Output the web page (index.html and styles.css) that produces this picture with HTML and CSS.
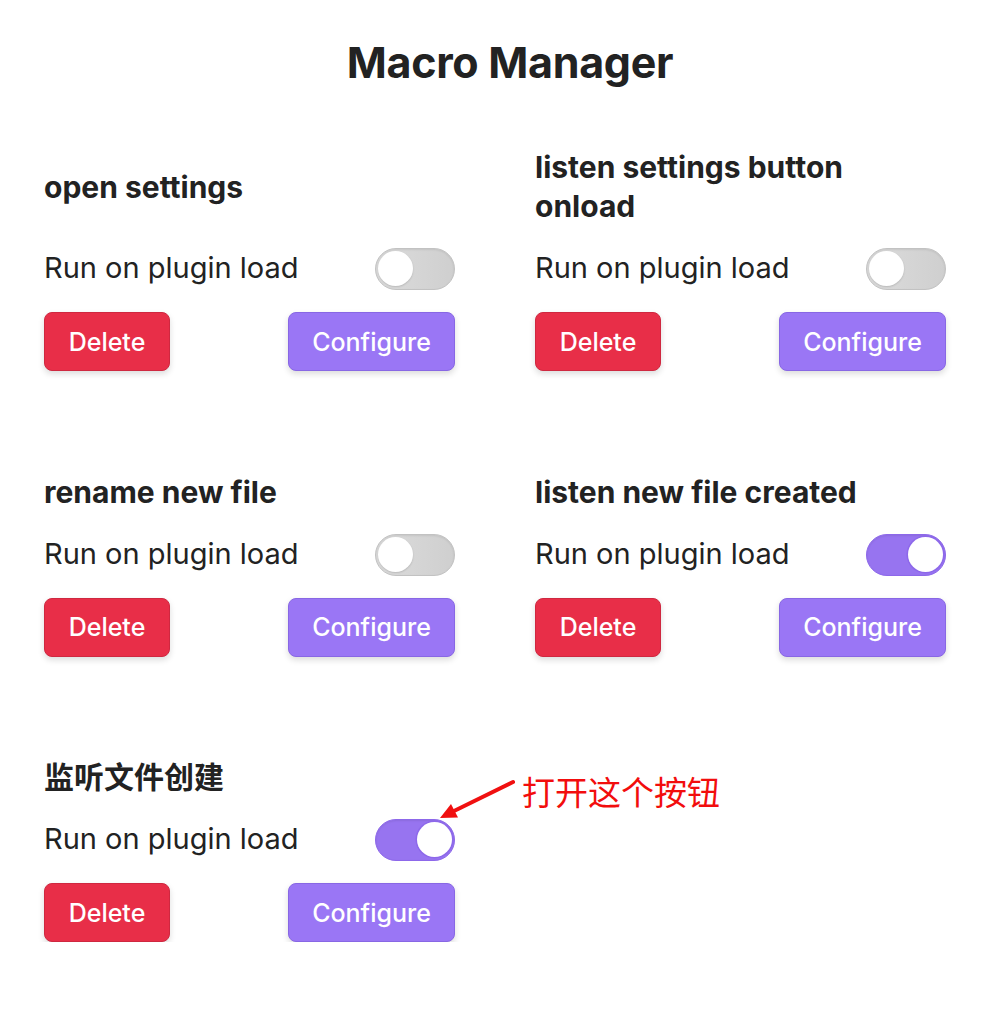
FILE: index.html
```html
<!DOCTYPE html>
<html lang="en">
<head>
<meta charset="utf-8">
<title>Macro Manager</title>
<link rel="stylesheet" href="styles.css">
</head>
<body>
<div class="page">
  <h1 class="title">Macro Manager</h1>
  <div class="grid">
    <section class="card">
      <div class="card-head"><h3 class="card-title">open settings</h3></div>
      <div class="setting"><span class="setting-label">Run on plugin load</span><span class="toggle"></span></div>
      <div class="actions"><button class="btn btn-delete">Delete</button><button class="btn btn-config">Configure</button></div>
    </section>
    <section class="card">
      <div class="card-head"><h3 class="card-title">listen settings button onload</h3></div>
      <div class="setting"><span class="setting-label">Run on plugin load</span><span class="toggle"></span></div>
      <div class="actions"><button class="btn btn-delete">Delete</button><button class="btn btn-config">Configure</button></div>
    </section>
    <section class="card">
      <div class="card-head"><h3 class="card-title">rename new file</h3></div>
      <div class="setting"><span class="setting-label">Run on plugin load</span><span class="toggle"></span></div>
      <div class="actions"><button class="btn btn-delete">Delete</button><button class="btn btn-config">Configure</button></div>
    </section>
    <section class="card">
      <div class="card-head"><h3 class="card-title">listen new file created</h3></div>
      <div class="setting"><span class="setting-label">Run on plugin load</span><span class="toggle is-on"></span></div>
      <div class="actions"><button class="btn btn-delete">Delete</button><button class="btn btn-config">Configure</button></div>
    </section>
    <section class="card">
      <div class="card-head"><h3 class="card-title">监听文件创建</h3></div>
      <div class="setting"><span class="setting-label">Run on plugin load</span><span class="toggle is-on"></span></div>
      <div class="actions"><button class="btn btn-delete">Delete</button><button class="btn btn-config">Configure</button></div>
      <svg class="note-arrow" width="90" height="50" viewBox="0 0 90 50">
        <line x1="79" y1="6" x2="19" y2="35.5" stroke="#f01010" stroke-width="4" stroke-linecap="round"/>
        <polygon points="6,42 24,41.5 17,28" fill="#f01010"/>
      </svg>
      <span class="note-text">打开这个按钮</span>
    </section>
  </div>
</div>
</body>
</html>
```

FILE: styles.css
```css
* { box-sizing: border-box; }
html, body { margin: 0; padding: 0; background: #ffffff; }
body {
  font-family: Inter, "Noto Sans", "Noto Sans CJK SC", sans-serif;
  color: #222222;
}
.page {
  margin-left: 44px;
  width: 932px;
  padding-top: 38px;
}
.title {
  margin: 0 0 62px 0;
  text-align: center;
  font-size: 43px;
  line-height: 48px;
  font-weight: 700;
  letter-spacing: -0.3px;
}
.grid {
  display: grid;
  grid-template-columns: 411px 411px;
  column-gap: 80px;
  row-gap: 101.5px;
}
.card {
  display: flex;
  flex-direction: column;
  position: relative;
}
.card-head {
  flex: 1;
  display: flex;
  align-items: center;
}
.card-title {
  margin: 0;
  max-width: 380px;
  font-size: 30px;
  line-height: 39px;
  font-weight: 700;
  font-family: Inter, "Noto Sans CJK SC", sans-serif;
}
.setting {
  margin-top: 22px;
  display: flex;
  align-items: center;
  justify-content: space-between;
  height: 42px;
}
.setting-label {
  font-size: 29px;
  font-weight: 400;
  padding-bottom: 3px;
}
.toggle {
  position: relative;
  width: 80px;
  height: 42px;
  border-radius: 21px;
  background: linear-gradient(90deg, #dcdcdc, #cfcfcf);
  border: 1.5px solid #c2c2c2;
  box-shadow: inset 0 1px 2px rgba(0,0,0,0.08);
}
.toggle::after {
  content: "";
  position: absolute;
  left: 2px;
  top: 2px;
  width: 35px;
  height: 35px;
  border-radius: 50%;
  background: #ffffff;
  box-shadow: 0 1px 2px rgba(0,0,0,0.15);
}
.toggle.is-on {
  background: #9774f0;
  border-color: #8d68ea;
}
.toggle.is-on::after {
  left: auto;
  right: 2px;
  box-shadow: 0 0 0 1.5px #8d68ea;
}
.actions {
  margin-top: 22px;
  display: flex;
  justify-content: space-between;
}
.btn {
  height: 59px;
  border-radius: 8px;
  font-family: Inter, "Noto Sans", sans-serif;
  font-size: 25px;
  font-weight: 500;
  color: #ffffff;
  padding: 0;
  box-shadow: 0 3px 6px rgba(0,0,0,0.14);
}
.btn-delete {
  width: 126px;
  background: #e82e48;
  border: 1.5px solid #cf2840;
}
.btn-config {
  width: 167px;
  background: #9a76f5;
  border: 1.5px solid #8867e4;
}
.note-arrow {
  position: absolute;
  left: 390px;
  top: 18px;
}
.note-text {
  position: absolute;
  left: 478px;
  top: 9px;
  font-family: "Noto Sans CJK SC", sans-serif;
  font-size: 33px;
  line-height: 48px;
  color: #f20d0d;
  white-space: nowrap;
}
```
